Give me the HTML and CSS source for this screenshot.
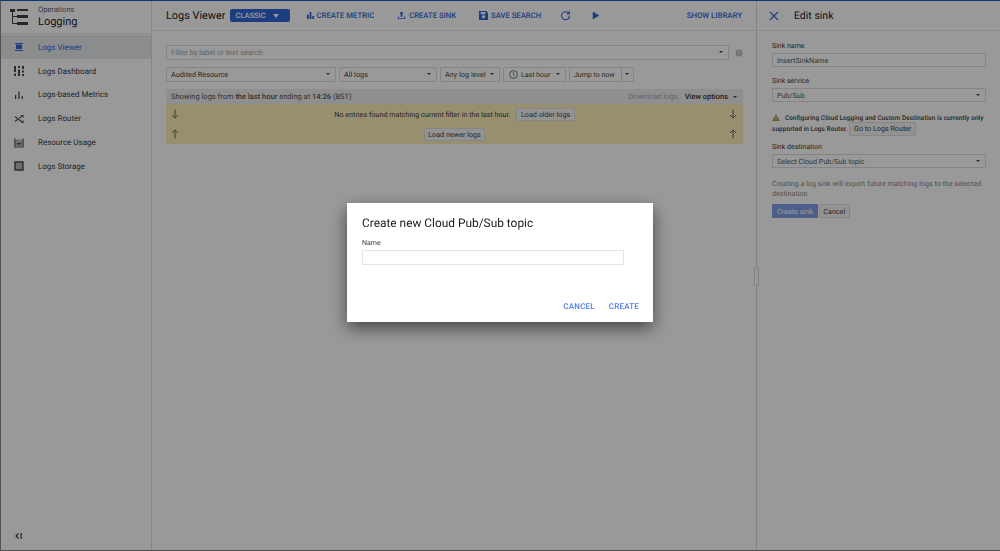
FILE: index.html

```html
<!DOCTYPE html>
<html lang="en">
<head>
    <meta charset="UTF-8">
    <meta name="viewport" content="width=device-width, initial-scale=1.0">
    <title>Logs Viewer</title>
    <link rel="stylesheet" href="styles.css">
</head>
<body>

<div class="app">
    <!-- Left nav -->
    <aside class="sidebar">
        <div class="brand">
            <svg class="brand-icon" width="18" height="18" viewBox="0 0 18 18">
                <path d="M0 1h5v3H0zM7 1h11v2H7zM7 7h11v3H7zM7 14h11v3H7z" fill="#3c4043"/>
                <path d="M2.500 4v11.500H7M2.500 8.500H7" fill="none" stroke="#3c4043" stroke-width="1"/>
            </svg>
            <div>
                <div class="brand-small">Operations</div>
                <div class="brand-big">Logging</div>
            </div>
        </div>
        <nav class="nav">
            <a class="nav-item active">
                <svg width="10" height="10" viewBox="0 0 10 10"><path d="M1 1h8v1H1zM2 2.500h6v4.500H2zM1 8h8v1H1z" fill="#3367d6"/></svg>
                Logs Viewer
            </a>
            <a class="nav-item">
                <svg width="10" height="10" viewBox="0 0 10 10"><path d="M0 0h2v6H0zM0 7.500h2V10H0zM4 0h2v2H4zM4 3.500h2V10H4zM8 0h2v3H8zM8 4.500h2v2H8zM8 8h2v2H8z" fill="#4a4a4a"/></svg>
                Logs Dashboard
            </a>
            <a class="nav-item">
                <svg width="10" height="10" viewBox="0 0 10 10"><path d="M1 5h1.300v4H1zM4.300 1.500h1.300V9H4.300zM7.600 6h1.300v3H7.600z" fill="#4a4a4a"/></svg>
                Logs-based Metrics
            </a>
            <a class="nav-item">
                <svg width="10" height="10" viewBox="0 0 10 10"><path d="M1 2.500l6.500 5M1 7.500l2.500-2M5.500 4L7.500 2.500" fill="none" stroke="#4a4a4a" stroke-width="1.200"/><path d="M6.500 1h3v3zM6.500 9h3V6z" fill="#4a4a4a"/></svg>
                Logs Router
            </a>
            <a class="nav-item">
                <svg width="10" height="10" viewBox="0 0 10 10"><path d="M1 .500v8.500h8V.500" fill="none" stroke="#4a4a4a" stroke-width="1.200"/><path d="M2 1.500h6V8H2z" fill="#bbb"/><path d="M3 5h4v1.500H3z" fill="#4a4a4a"/></svg>
                Resource Usage
            </a>
            <a class="nav-item">
                <svg width="10" height="10" viewBox="0 0 10 10"><path d="M1 1h8v8H1z" fill="#b5b5b5" stroke="#4a4a4a" stroke-width="1.400"/></svg>
                Logs Storage
            </a>
        </nav>
        <div class="collapse">
            <svg width="8" height="6" viewBox="0 0 8 6"><path d="M3.500.500L1 3l2.500 2.500" fill="none" stroke="#333" stroke-width="1.100"/><path d="M5.500 0h1.500v6H5.500z" fill="#666"/></svg>
        </div>
    </aside>

    <!-- Logs viewer -->
    <main class="main">
        <header class="toolbar">
            <h1 class="page-title">Logs Viewer</h1>
            <span class="classic">CLASSIC <i class="caret-white"></i></span>
            <a class="tool tool-metric">
                <svg width="9" height="9" viewBox="0 0 10 10"><path d="M1 4h2v5H1zM4 1h2v8H4zM7 5.500h2V9H7z" fill="#3367d6"/></svg>
                CREATE METRIC
            </a>
            <a class="tool tool-sink">
                <svg width="9" height="9" viewBox="0 0 10 10"><path d="M5 .500L7.500 3H6v3.500H4V3H2.500zM1 6h1v2h6V6h1v3H1z" fill="#3367d6"/></svg>
                CREATE SINK
            </a>
            <a class="tool tool-save">
                <svg width="9" height="9" viewBox="0 0 10 10"><path d="M0 0h8l2 2v8H0zM2 1v2.500h5V1zM3.200 6.300a1.800 1.800 0 1 0 3.600 0a1.800 1.800 0 1 0-3.600 0z" fill="#3367d6" fill-rule="evenodd"/></svg>
                SAVE SEARCH
            </a>
            <svg class="tool-refresh" width="11" height="11" viewBox="0 0 11 11"><path d="M8.800 3.500A4 4 0 1 0 9.500 5.500" fill="none" stroke="#3367d6" stroke-width="1.100"/><path d="M9.800.800v3.500H6.300z" fill="#3367d6"/></svg>
            <svg class="tool-play" width="8" height="9" viewBox="0 0 8 9"><path d="M1 1v7l6-3.500z" fill="#3367d6" stroke="#3367d6" stroke-width=".5"/></svg>
            <a class="tool tool-library">SHOW LIBRARY</a>
        </header>

        <section class="content">
            <div class="filter-row">
                <div class="field filter">Filter by label or text search <i class="caret"></i></div>
                <svg width="8" height="8" viewBox="0 0 8 8"><circle cx="4" cy="4" r="3.500" fill="#bdbdbd"/><path d="M3 3a1 1 0 1 1 1.400 1L4 4.600M4 5.400v1" fill="none" stroke="#fff" stroke-width=".8"/></svg>
            </div>
            <div class="select-row">
                <div class="field sel-resource">Audited Resource <i class="caret"></i></div>
                <div class="field sel-logs">All logs <i class="caret"></i></div>
                <div class="field sel-level">Any log level <i class="caret"></i></div>
                <div class="field sel-time">
                    <svg width="9" height="9" viewBox="0 0 9 9"><circle cx="4.500" cy="4.500" r="3.900" fill="none" stroke="#555" stroke-width=".8"/><path d="M4.500 2.200v2.500l1.600 1" fill="none" stroke="#555" stroke-width=".7"/></svg>
                    Last hour <i class="caret"></i>
                </div>
                <div class="field sel-jump">Jump to now<span class="jump-split"><i class="caret"></i></span></div>
            </div>
            <div class="status-row">
                <span>Showing logs from <b>the last hour</b> ending at <b>14:26</b> (BST)</span>
                <span class="status-right">
                    <span class="download">Download logs</span>
                    <b>View options</b> <i class="caret"></i>
                </span>
            </div>
            <div class="notice">
                <div class="notice-row">
                    <svg width="8" height="10" viewBox="0 0 8 10"><path d="M4 .500v8.500M1 6l3 3 3-3" fill="none" stroke="#555" stroke-width=".9"/></svg>
                    <span class="notice-mid">No entries found matching current filter in the last hour. <span class="small-btn">Load older logs</span></span>
                    <svg width="8" height="10" viewBox="0 0 8 10"><path d="M4 .500v8.500M1 6l3 3 3-3" fill="none" stroke="#555" stroke-width=".9"/></svg>
                </div>
                <div class="notice-row">
                    <svg width="8" height="10" viewBox="0 0 8 10"><path d="M4 9.500V1M1 4l3-3 3 3" fill="none" stroke="#555" stroke-width=".9"/></svg>
                    <span class="notice-mid"><span class="small-btn">Load newer logs</span></span>
                    <svg width="8" height="10" viewBox="0 0 8 10"><path d="M4 9.500V1M1 4l3-3 3 3" fill="none" stroke="#555" stroke-width=".9"/></svg>
                </div>
            </div>
        </section>
    </main>

    <!-- Edit sink panel -->
    <aside class="panel">
        <span class="panel-handle"></span>
        <header class="panel-head">
            <svg width="10" height="10" viewBox="0 0 10 10"><path d="M1 1l8 8M9 1l-8 8" fill="none" stroke="#3367d6" stroke-width="1.100"/></svg>
            <h2>Edit sink</h2>
        </header>
        <div class="panel-body">
            <label>Sink name</label>
            <div class="field panel-field">InsertSinkName</div>
            <label>Sink service</label>
            <div class="field panel-field">Pub/Sub <i class="caret"></i></div>
            <div class="warning">
                <div class="warn-line">
                    <svg class="warn-icon" width="8" height="7" viewBox="0 0 8 7"><path d="M4 0l4 7H0z" fill="#b09a5a"/><path d="M3.600 2.500h.8v2.300h-.8zM3.600 5.300h.8v.8h-.8z" fill="#eee"/></svg>
                    <span>Configuring Cloud Logging and Custom Destination is currently only</span>
                </div>
                <div class="warn-line warn-second">
                    <span>supported in Logs Router.</span>
                    <span class="small-btn">Go to Logs Router</span>
                </div>
            </div>
            <label>Sink destination</label>
            <div class="field panel-field">Select Cloud Pub/Sub topic <i class="caret"></i></div>
            <p class="hint">Creating a log sink will export future matching logs to the selected destination.</p>
            <div class="panel-btns">
                <span class="btn-primary">Create sink</span>
                <span class="small-btn">Cancel</span>
            </div>
        </div>
    </aside>
</div>

<!-- Modal -->
<div class="overlay">
    <div class="dialog">
        <h3>Create new Cloud Pub/Sub topic</h3>
        <label>Name</label>
        <input class="dialog-input" type="text">
        <div class="dialog-actions">
            <a>CANCEL</a>
            <a>CREATE</a>
        </div>
    </div>
</div>

</body>
</html>
```

FILE: styles.css

```css
* { box-sizing: border-box; }
html, body { height: 100%; }
body { margin: 0; font-family: Roboto, Arial, sans-serif; font-size: 7.5px; color: #3c4043; background-color: white; overflow: hidden; text-rendering: geometricPrecision; }
i { font-style: normal; }
b { font-weight: 500; }

.app { display: flex; height: 551px; border-top: 1px solid #1a5fc0; border-left: 1px solid #888; border-bottom: 1px solid #888; }

.sidebar { width: 151px; flex-shrink: 0; border-right: 1px solid #e0e0e0; display: flex; flex-direction: column; }
.brand { height: 33px; display: flex; align-items: center; gap: 10px; padding-left: 9px; border-bottom: 1px solid #e8e8e8; margin-bottom: 1px; }
.brand-small { font-size: 7.5px; line-height: 9px; color: #5f6368; }
.brand-big { font-size: 11px; line-height: 14px; margin-top: 1px; color: #202124; }
.nav { flex: 1; }
.nav-item { height: 23.8px; display: flex; align-items: center; gap: 14px; padding: 1px 0 0 13px; font-size: 8px; color: #3c4043; }
.nav-item.active { background-color: #e8eaed; color: #3367d6; }
.collapse { height: 18px; padding-left: 14px; }

.main { flex: 1; min-width: 0; border-right: 1px solid #dadada; }
.toolbar { height: 30px; display: flex; align-items: center; padding-left: 14px; border-bottom: 1px solid #e8e8e8; }
.page-title { margin: 0; font-size: 10.9px; font-weight: 400; color: #202124; }
.classic { margin-left: 4px; width: 60px; height: 13px; background-color: #3367d6; color: white; border-radius: 2px; font-size: 7.5px; font-weight: 500; display: flex; align-items: center; padding-left: 6px; gap: 7px; }
.caret-white { width: 0; height: 0; border-left: 3.5px solid transparent; border-right: 3.5px solid transparent; border-top: 4px solid white; }
.tool { display: flex; align-items: center; gap: 3px; font-size: 7.7px; font-weight: 500; color: #3367d6; white-space: nowrap; }
.tool-metric { margin-left: 16px; gap: 2px; }
.tool-sink { margin-left: 23px; }
.tool-save { margin-left: 23px; }
.tool-refresh { margin-left: 19px; }
.tool-play { margin-left: 21px; }
.tool-library { margin-left: auto; margin-right: 14px; font-size: 7.8px; }

.content { padding: 14px 13px 0 14px; }
.filter-row { display: flex; align-items: center; gap: 6px; }
.field { position: relative; height: 15px; border: 1px solid #dcdcdc; border-radius: 1px; background-color: white; display: flex; align-items: center; padding-left: 4px; font-size: 7.3px; color: #444; white-space: nowrap; }
.field .caret { position: absolute; right: 5px; top: 5px; }
.caret { display: inline-block; width: 0; height: 0; border-left: 2px solid transparent; border-right: 2px solid transparent; border-top: 2.5px solid #444; vertical-align: middle; }
.filter { flex: 1; color: #aaa; font-size: 7.5px; }
.select-row { display: flex; gap: 3px; margin-top: 7px; }
.sel-resource { width: 170px; }
.sel-logs { width: 98px; }
.sel-level { width: 60px; }
.sel-time { width: 63px; gap: 3px; padding-left: 5px; font-size: 7px; }
.sel-jump { width: 65px; font-size: 7px; }
.jump-split { position: absolute; right: 0; top: 0; bottom: 0; width: 12px; border-left: 1px solid #d8d8d8; }
.jump-split .caret { position: absolute; right: 4px; top: 5px; }
.status-row { margin-top: 7px; height: 15px; padding: 0 6px 0 5px; background-color: #eeeeee; display: flex; align-items: center; justify-content: space-between; font-size: 7.5px; color: #555; }
.status-right { display: flex; align-items: center; gap: 3px; color: #333; }
.status-right .caret { margin-left: 2px; }
.download { color: #aaa; margin-right: 4px; }
.notice { height: 40px; background-color: #fdeeb7; font-size: 7.2px; }
.notice-row { height: 20px; display: flex; align-items: center; justify-content: space-between; padding: 0 6px 0 5px; }
.notice-mid { flex: 1; display: flex; align-items: center; justify-content: center; gap: 6px; padding-left: 1px; }
.small-btn { display: inline-flex; align-items: center; height: 13px; padding: 0 3.5px; background-color: #f5f5f5; border: 1px solid #e0e0e0; border-radius: 1px; color: #444; font-size: 7.2px; }

.panel { position: relative; width: 243px; flex-shrink: 0; }
.panel-handle { position: absolute; left: -3px; top: 266px; width: 5px; height: 19px; border: 1px solid #dcdcdc; border-radius: 1px; background-color: white; }
.panel-head { height: 30px; display: flex; align-items: center; gap: 15px; padding-left: 12px; border-bottom: 1px solid #e8e8e8; }
.panel-head h2 { margin: 0; font-size: 10.5px; font-weight: 400; color: #202124; }
.panel-body { padding: 11px 14px 0 15px; }
.panel-body label { display: block; font-size: 7px; color: #3c4043; line-height: 8px; margin-bottom: 3px; }
.panel-field { height: 14px; margin-bottom: 10px; padding-left: 4px; font-size: 7.2px; color: #555; }
.warning { font-size: 6.57px; font-weight: 500; margin: 8px 0 9px; color: #444; white-space: nowrap; }
.warn-line { display: flex; align-items: center; gap: 5px; height: 11px; }
.warn-icon { flex-shrink: 0; }
.warn-second { gap: 2px; }
.warning .small-btn { height: 14px; font-weight: 400; }
.hint { margin: 11px 0 5px; font-size: 7.15px; line-height: 10px; color: #888; }
.panel-btns { display: flex; gap: 1px; }
.panel-btns .small-btn { height: 14px; }
.btn-primary { display: inline-flex; align-items: center; height: 14px; padding: 0 5px; background-color: #7f9fe8; color: white; font-size: 7.2px; border-radius: 1px; }

.overlay { position: fixed; inset: 0; background-color: rgba(0, 0, 0, 0.4); display: flex; align-items: center; justify-content: center; padding-bottom: 26px; }
.dialog { width: 306px; height: 119px; background-color: white; padding: 13px 15px 0; box-shadow: 0 6px 16px rgba(0, 0, 0, 0.55); display: flex; flex-direction: column; }
.dialog h3 { margin: 0; font-size: 11.9px; line-height: 14px; font-weight: 400; color: #202124; }
.dialog label { margin-top: 9px; font-size: 7px; line-height: 8px; color: #3c4043; }
.dialog-input { width: 262px; height: 15px; margin: 3px 0 0; padding: 0; border: 1px solid #e4e4e4; outline: none; }
.dialog-actions { margin-top: auto; padding-bottom: 11px; margin-right: -1px; display: flex; justify-content: flex-end; gap: 14px; font-size: 8px; font-weight: 500; letter-spacing: .2px; color: #4a7bea; }
```
